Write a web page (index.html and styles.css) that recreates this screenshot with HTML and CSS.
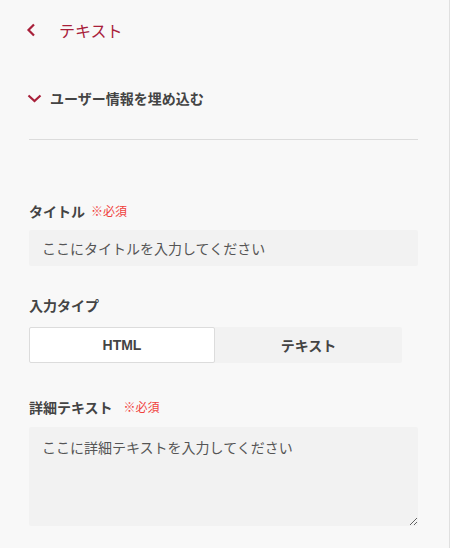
FILE: index.html
```html
<!DOCTYPE html>
<html lang="ja">
<head>
<meta charset="utf-8">
<title>テキスト</title>
<link rel="stylesheet" href="styles.css">
</head>
<body>
<div class="panel">
  <header class="header">
    <button class="back" type="button" aria-label="戻る">
      <svg width="12" height="16" viewBox="0 0 12 16"><path d="M9 2.5 L3.5 8 L9 13.5" fill="none" stroke="#a8203a" stroke-width="2.2"/></svg>
    </button>
    <h1 class="title">テキスト</h1>
  </header>

  <div class="content">
    <div class="toggle">
      <svg class="toggle-icon" width="15" height="10" viewBox="0 0 15 10"><path d="M1.5 2.5 L7.5 8 L13.5 2.5" fill="none" stroke="#a8203a" stroke-width="2.2"/></svg>
      <span class="toggle-text">ユーザー情報を埋め込む</span>
    </div>
    <hr class="divider">

    <div class="field field-first">
      <label class="label">タイトル <span class="req">※必須</span></label>
      <input class="input" type="text" placeholder="ここにタイトルを入力してください">
    </div>

    <div class="field field-type">
      <label class="label">入力タイプ</label>
      <div class="segment">
        <button class="seg seg-active" type="button">HTML</button>
        <button class="seg" type="button">テキスト</button>
      </div>
    </div>

    <div class="field field-detail">
      <label class="label">詳細テキスト <span class="req req-wide">※必須</span></label>
      <textarea class="textarea" placeholder="ここに詳細テキストを入力してください"></textarea>
    </div>
  </div>
</div>
</body>
</html>
```

FILE: styles.css
```css
* { box-sizing: border-box; }
html, body {
  margin: 0;
  padding: 0;
  background: #f8f8f8;
}
body {
  font-family: "Noto Sans CJK JP", "Noto Sans", sans-serif;
  color: #444;
}
.panel {
  width: 450px;
  height: 548px;
  border-right: 1px solid #e0e0e0;
  background: #f8f8f8;
  overflow: hidden;
}
.header {
  height: 60px;
  display: flex;
  align-items: center;
  padding-left: 25px;
}
.back {
  border: 0;
  background: none;
  padding: 0;
  width: 12px;
  height: 16px;
  display: flex;
  align-items: center;
  cursor: pointer;
}
.title {
  margin: 0 0 0 22px;
  font-size: 16px;
  font-weight: 400;
  color: #a8203a;
  line-height: 20px;
}
.content {
  padding: 0 31px 0 29px;
}
.toggle {
  margin-top: 28px;
  height: 20px;
  display: flex;
  align-items: center;
}
.toggle-icon {
  margin-left: -2px;
  margin-right: 8px;
}
.toggle-text {
  font-size: 14px;
  font-weight: 700;
  color: #444;
  line-height: 20px;
}
.divider {
  margin: 31px 0 0;
  border: 0;
  border-top: 1px solid #dcdcdc;
  height: 0;
}
.field {
  display: flex;
  flex-direction: column;
}
.field-first { margin-top: 61px; }
.field-type { margin-top: 29px; }
.field-detail { margin-top: 34px; }
.label {
  font-size: 14px;
  font-weight: 700;
  line-height: 20px;
  color: #444;
  display: flex;
  align-items: center;
}
.req {
  font-size: 12px;
  font-weight: 400;
  color: #f0413c;
  margin-left: 6px;
}
.req-wide { margin-left: 11px; }
.input {
  margin-top: 9px;
  height: 36px;
  width: 100%;
  border: 0;
  border-radius: 2px;
  background: #f2f2f2;
  padding: 0 13px;
  font-family: inherit;
  font-size: 14px;
  color: #444;
  outline: none;
}
.input::placeholder, .textarea::placeholder {
  color: #555;
  opacity: 1;
}
.segment {
  margin-top: 12px;
  width: 373px;
  height: 36px;
  display: grid;
  grid-template-columns: 186px 187px;
  background: #f2f2f2;
  border-radius: 2px;
}
.seg {
  border: 0;
  background: transparent;
  font-family: inherit;
  font-size: 14px;
  font-weight: 700;
  color: #444;
  padding: 0;
  cursor: pointer;
}
.seg-active {
  background: #fff;
  border: 1px solid #dcdcdc;
  border-radius: 2px;
  font-family: "Liberation Sans", "Noto Sans CJK JP", sans-serif;
  font-size: 14px;
}
.textarea {
  margin-top: 10px;
  width: 100%;
  height: 99px;
  border: 0;
  border-radius: 2px;
  background: #f2f2f2;
  padding: 10px 13px;
  font-family: inherit;
  font-size: 14px;
  line-height: 20px;
  color: #444;
  resize: vertical;
  outline: none;
  display: block;
}
```
